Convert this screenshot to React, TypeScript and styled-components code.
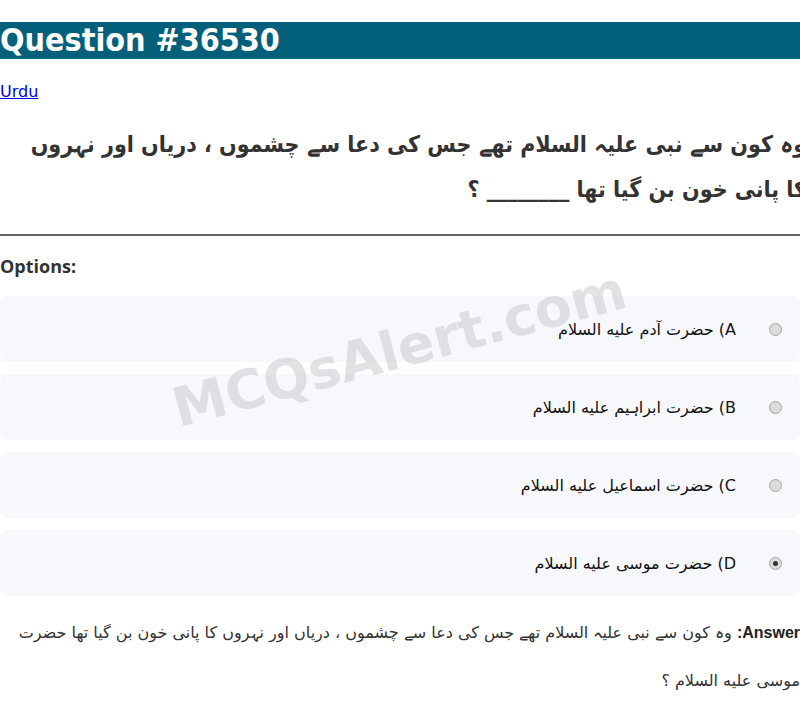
import React from 'react';
import styled, { createGlobalStyle } from 'styled-components';

const GlobalStyle = createGlobalStyle`
    html, body {
        margin: 0;
        padding: 0;
        overflow-x: hidden;
        background: #ffffff;
        font-family: "DejaVu Sans", sans-serif;
    }
`;

const Page = styled.div`
    position: relative;
    padding-top: 22px;
`;

const TitleBar = styled.h1`
    margin: 0;
    background-color: #03607a;
    color: #ffffff;
    font-family: "DejaVu Sans Condensed", "DejaVu Sans", sans-serif;
    font-size: 32px;
    font-weight: bold;
    line-height: 37px;
    height: 37px;
`;

const LangLink = styled.a`
    display: inline-block;
    margin-top: 24px;
    color: #0000ee;
    font-size: 16px;
    line-height: 18px;
    text-decoration: underline;
`;

const QuestionText = styled.p`
    direction: rtl;
    text-align: right;
    margin: 21px -6px 0 0;
    padding-left: 18px;
    color: #333333;
    font-family: "DejaVu Sans Condensed", "DejaVu Sans", sans-serif;
    font-size: 23px;
    font-weight: bold;
    line-height: 45px;
`;

const Rule = styled.hr`
    margin: 22px 0 0;
    border: 0;
    border-top: 2px solid #666666;
`;

const OptionsLabel = styled.h3`
    margin: 18px 0 0;
    color: #333333;
    font-family: "Open Sans", sans-serif;
    font-size: 18px;
    font-weight: 700;
    line-height: 25px;
`;

const OptionList = styled.div`
    display: flex;
    flex-direction: column;
    gap: 12px;
    margin-top: 17px;
`;

const OptionRow = styled.label`
    display: flex;
    flex-direction: row-reverse;
    align-items: center;
    height: 66px;
    padding-right: 18px;
    border-radius: 8px;
    background-color: #f7f8fc;
`;

const Radio = styled.span<{ $checked?: boolean }>`
    position: relative;
    width: 11px;
    height: 11px;
    border: 1px solid #a3a3a3;
    border-radius: 50%;
    background-color: #dcdcdc;
    &::after {
        content: '';
        display: ${p => (p.$checked ? 'block' : 'none')};
        position: absolute;
        left: 3px;
        top: 3px;
        width: 5px;
        height: 5px;
        border-radius: 50%;
        background-color: #333333;
    }
`;

const OptionText = styled.span`
    direction: rtl;
    margin-right: 33px;
    color: #111111;
    font-size: 16px;
`;

const AnswerText = styled.p`
    direction: rtl;
    text-align: right;
    margin: 13px 0 0;
    padding-left: 14px;
    color: #333333;
    font-size: 16px;
    line-height: 48px;
`;

const AnswerLabel = styled.b`
    font-family: "Liberation Sans", Arial, sans-serif;
    color: #222222;
`;

const Watermark = styled.div`
    position: absolute;
    left: 174px;
    top: 378px;
    transform: rotate(-15deg);
    transform-origin: left center;
    color: rgba(195, 197, 201, 0.5);
    font-family: "DejaVu Sans", sans-serif;
    font-size: 54px;
    font-weight: bold;
    white-space: nowrap;
    pointer-events: none;
`;

const options = [
    { key: 'A', text: 'حضرت آدم علیه السلام' },
    { key: 'B', text: 'حضرت ابراہیم علیه السلام' },
    { key: 'C', text: 'حضرت اسماعیل علیه السلام' },
    { key: 'D', text: 'حضرت موسی علیه السلام' },
];

export default function App() {
    const answer = 'D';

    return (
        <>
            <GlobalStyle />
            <Page>
                <TitleBar>Question #36530</TitleBar>
                <LangLink href="#">Urdu</LangLink>
                <QuestionText>
                    وہ کون سے نبی علیہ السلام تھے جس کی دعا سے چشموں ، دریاں اور نہروں کا پانی خون بن گیا تھا ________ ؟
                </QuestionText>
                <Rule />
                <OptionsLabel>Options:</OptionsLabel>
                <OptionList>
                    {options.map(o => (
                        <OptionRow key={o.key}>
                            <Radio $checked={o.key === answer} />
                            <OptionText>{o.key}) {o.text}</OptionText>
                        </OptionRow>
                    ))}
                </OptionList>
                <AnswerText>
                    <AnswerLabel>Answer:</AnswerLabel> وہ کون سے نبی علیہ السلام تھے جس کی دعا سے چشموں ، دریاں اور نہروں کا پانی خون بن گیا تھا حضرت موسی علیه السلام ؟
                </AnswerText>
                <Watermark>MCQsAlert.com</Watermark>
            </Page>
        </>
    );
}
